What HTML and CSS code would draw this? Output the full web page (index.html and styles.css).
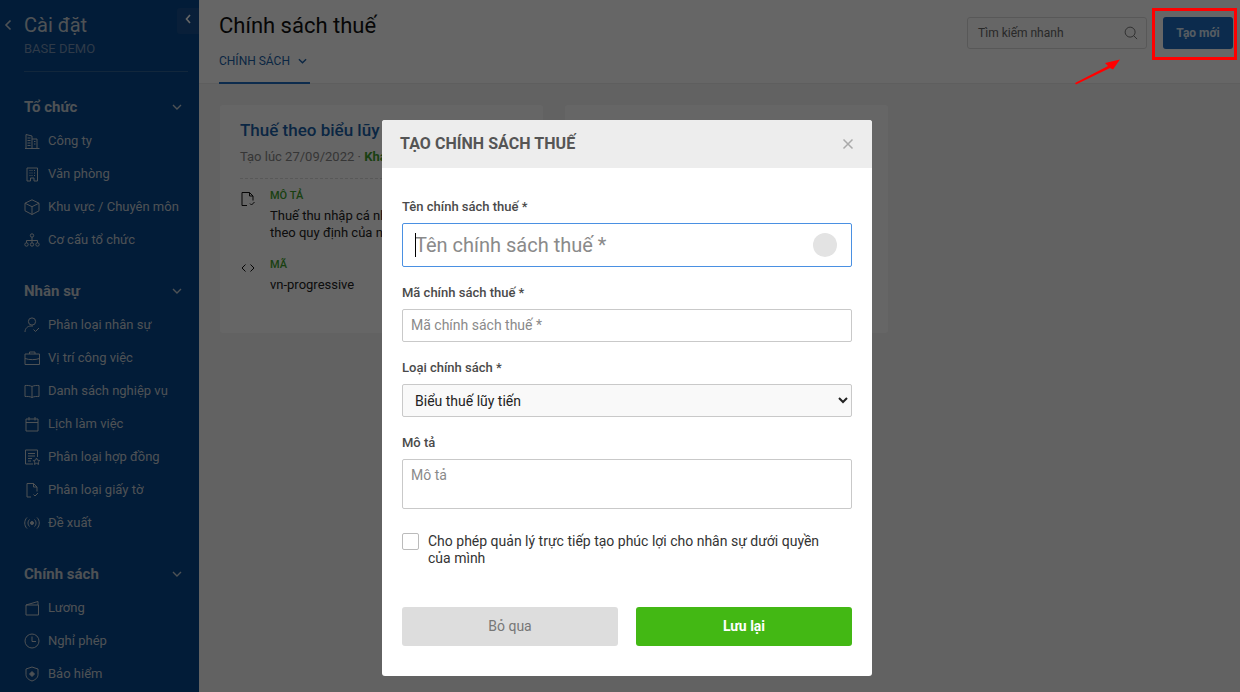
FILE: index.html
```html
<!DOCTYPE html>
<html lang="vi">
<head>
<meta charset="utf-8">
<title>Chính sách thuế</title>
<link rel="stylesheet" href="styles.css">
</head>
<body>
<div class="app">
  <aside class="sidebar">
    <div class="side-head">
      <svg class="back" viewBox="0 0 8 12"><path d="M6.500 1.500 2 6l4.500 4.500"/></svg>
      <div>
        <div class="side-title">Cài đặt</div>
        <div class="side-sub">BASE DEMO</div>
      </div>
      <div class="collapse"><svg viewBox="0 0 8 12"><path d="M6 2 2.500 6 6 10"/></svg></div>
    </div>
    <div class="side-rule"></div>

    <div class="group">
      <div class="group-head">Tổ chức <svg viewBox="0 0 10 6"><path d="M1 1l4 4 4-4"/></svg></div>
      <a class="item"><svg viewBox="0 0 16 16"><path d="M1 15.500h14.500M2 15.500V1.500l6 1.500v12.500M8 6h5v9.500M3.500 5h3M3.500 7.500h3M3.500 10h3M3.500 12.500h3M10 8.500h1.500M10 11h1.500"/></svg>Công ty</a>
      <a class="item"><svg viewBox="0 0 16 16"><path d="M3 15V2h10.500v13h-3.500v-3H6.500v3zM5.500 4.500h1M7.500 4.500h1M10 4.500h1M5.500 7h1M7.500 7h1M10 7h1M5.500 9.500h1M7.500 9.500h1M10 9.500h1"/></svg>Văn phòng</a>
      <a class="item"><svg viewBox="0 0 16 16"><path d="M8 .8l7 3.400v7.600l-7 3.700-7-3.700V4.200zM1 4.200l7 3.500 7-3.500M8 7.700v7.800"/></svg>Khu vực / Chuyên môn</a>
      <a class="item"><svg viewBox="0 0 16 16"><circle cx="8" cy="3.500" r="1.700"/><circle cx="2.500" cy="12.500" r="1.700"/><circle cx="8" cy="12.500" r="1.700"/><circle cx="13.500" cy="12.500" r="1.700"/><path d="M8 5.200v5.600M2.500 10.800V8.500h11v2.300"/></svg>Cơ cấu tổ chức</a>
    </div>

    <div class="group">
      <div class="group-head">Nhân sự <svg viewBox="0 0 10 6"><path d="M1 1l4 4 4-4"/></svg></div>
      <a class="item"><svg viewBox="0 0 16 16"><circle cx="8" cy="4.500" r="3.600"/><path d="M1 15c0-3.500 2.500-6 6-6h2M9.500 12.500l2 2 3.500-3.500"/></svg>Phân loại nhân sự</a>
      <a class="item"><svg viewBox="0 0 16 16"><path d="M1 4h14.500v10.500H1zM5.500 4V2h5.500v2M1 8.500c4 1.500 10.500 1.500 14.500 0"/></svg>Vị trí công việc</a>
      <a class="item"><svg viewBox="0 0 16 16"><path d="M8 3.500C6.500 2.500 3 2.300 1 2.500v11c2-.2 5.500 0 7 1 1.500-1 5-1.200 7-1v-11c-2-.2-5.500 0-7 1zM8 3.500v11"/></svg>Danh sách nghiệp vụ</a>
      <a class="item"><svg viewBox="0 0 16 16"><path d="M2 3h12v12H2zM2 6.500h12M5 1v3.500M11 1v3.500"/></svg>Lịch làm việc</a>
      <a class="item"><svg viewBox="0 0 16 16"><path d="M9 15H1.500V1h12v7M4 4.500h7M4 7h7M4 9.500h4M4 12h3M12.500 9l1.100 2.200 2.200.3-1.600 1.600.4 2.300-2.100-1.100-2 1.100.4-2.300-1.600-1.600 2.200-.3z"/></svg>Phân loại hợp đồng</a>
      <a class="item"><svg viewBox="0 0 16 16"><path d="M7 15H3V1.500h6.500L13 5v4.500M9.500 1.500V5H13M9.500 12.500l1.500 1.500 3-3"/></svg>Phân loại giấy tờ</a>
      <a class="item"><svg viewBox="0 0 16 16"><circle cx="8" cy="8" r="1.500" class="solid"/><path d="M5.500 4.500c-2 2-2 5 0 7M10.500 4.500c2 2 2 5 0 7M3 2.500C0 5.500 0 10.500 3 13.500M13 2.500c3 3 3 8 0 11"/></svg>Đề xuất</a>
    </div>

    <div class="group">
      <div class="group-head">Chính sách <svg viewBox="0 0 10 6"><path d="M1 1l4 4 4-4"/></svg></div>
      <a class="item"><svg viewBox="0 0 16 16"><path d="M2 5v10h12.500V5zM2 5l12-3.500V5"/></svg>Lương</a>
      <a class="item"><svg viewBox="0 0 16 16"><circle cx="8" cy="8" r="7"/><path d="M8 3.500V8.500h4"/></svg>Nghỉ phép</a>
      <a class="item"><svg viewBox="0 0 16 16"><path d="M8 1l6 2v5.500c0 3.500-3 5.500-6 6.500-3-1-6-3-6-6.500V3z"/><path d="M8 5.500 10.500 8 8 10.500 5.500 8z" class="solid"/></svg>Bảo hiểm</a>
    </div>
  </aside>

  <main class="main">
    <header class="topbar">
      <div class="topbar-left">
        <h1 class="page-title">Chính sách thuế</h1>
        <div class="tab">CHÍNH SÁCH <svg viewBox="0 0 10 6"><path d="M1 1l4 4 4-4"/></svg></div>
      </div>
      <div class="topbar-right">
        <div class="search">
          <span>Tìm kiếm nhanh</span>
          <svg viewBox="0 0 16 16"><circle cx="7" cy="7" r="5.700"/><path d="M11 11l4 4"/></svg>
        </div>
        <button class="create">Tạo mới</button>
      </div>
    </header>
    <section class="cards">
      <article class="card">
        <h2 class="card-title">Thuế theo biểu lũy tiến</h2>
        <div class="card-meta">Tạo lúc 27/09/2022 · <b>Khả dụng</b></div>
        <div class="card-row">
          <svg viewBox="0 0 16 16"><path d="M7 14.500H2V1.500h7.500L13 5v4.500M9.500 1.500V5H13M10 12.500l1.500 1.500 3-3"/></svg>
          <div>
            <div class="field-name">MÔ TẢ</div>
            <div class="field-text">Thuế thu nhập cá nhân<br>theo quy định của nhà nước</div>
          </div>
        </div>
        <div class="card-row">
          <svg viewBox="0 0 16 16"><path d="M5.500 4.500 2 8l3.500 3.500M10.500 4.500 14 8l-3.500 3.500"/></svg>
          <div>
            <div class="field-name">MÃ</div>
            <div class="field-text">vn-progressive</div>
          </div>
        </div>
      </article>
      <article class="card"></article>
    </section>
  </main>
</div>

<div class="overlay"></div>

<form class="modal">
  <div class="modal-head">
    <div class="modal-title">TẠO CHÍNH SÁCH THUẾ</div>
    <svg class="close" viewBox="0 0 12 12"><path d="M1.500 1.500l9 9M10.500 1.500l-9 9"/></svg>
  </div>
  <div class="modal-body">
    <label class="label">Tên chính sách thuế *</label>
    <div class="focus-wrap">
      <input class="input input-lg" placeholder="Tên chính sách thuế *">
      <span class="caret"></span>
      <span class="dot"></span>
    </div>
    <label class="label">Mã chính sách thuế *</label>
    <input class="input input-sm" placeholder="Mã chính sách thuế *">
    <label class="label">Loại chính sách *</label>
    <select class="select"><option>Biểu thuế lũy tiến</option></select>
    <label class="label">Mô tả</label>
    <textarea class="input textarea" placeholder="Mô tả"></textarea>
    <label class="check">
      <input type="checkbox">
      <span>Cho phép quản lý trực tiếp tạo phúc lợi cho nhân sự dưới quyền của mình</span>
    </label>
    <div class="actions">
      <button type="button" class="btn btn-cancel">Bỏ qua</button>
      <button type="button" class="btn btn-save">Lưu lại</button>
    </div>
  </div>
</form>

<div class="mark-box"></div>
<svg class="mark-arrow" viewBox="0 0 48 28"><path d="M1 26 34 9 31 6 46 2.500 39 12.500 36 11 2 27.500z"/></svg>
</body>
</html>
```
FILE: styles.css
```css
* { box-sizing: border-box; }
html, body { margin: 0; height: 100%; overflow: hidden; }
body { font-family: Roboto, "Noto Sans", sans-serif; color: #222; background: #f5f5f5; }
svg { fill: none; stroke: currentColor; stroke-width: 1; flex: none; }
svg .solid { fill: currentColor; }

.app { display: flex; height: 692px; }

.sidebar { width: 199px; flex: none; background: #05468c; color: #c4ccd4; overflow: hidden; }
.side-head { position: relative; display: flex; padding: 13px 0 0 24px; }
.back { position: absolute; left: 4px; top: 19px; width: 8px; height: 12px; stroke-width: 1.600; }
.side-title { font-size: 20px; line-height: 25px; }
.side-sub { font-size: 13px; line-height: 14px; margin-top: 4px; color: #7592b4; }
.collapse { position: absolute; left: 177px; top: 8px; width: 22px; height: 26px; background: #174f8e; border-radius: 3px 0 0 3px; display: flex; align-items: center; justify-content: center; color: #fff; }
.collapse svg { width: 8px; height: 12px; stroke-width: 1.600; margin-bottom: 4px; }
.side-rule { height: 1px; background: #2f6196; margin: 15px 11px 0 24px; }

.group { padding: 0 0 0 24px; margin-bottom: 18px; }
.group-head { display: flex; align-items: center; justify-content: space-between; height: 34px; padding-right: 17px; margin-top: 18px; font-size: 15px; font-weight: 700; }
.group-head svg { width: 10px; height: 6px; stroke-width: 1.400; }
.item { display: flex; align-items: center; gap: 8px; height: 33px; font-size: 13px; white-space: nowrap; }
.item svg { width: 16px; height: 16px; }

.main { flex: 1; min-width: 0; display: flex; flex-direction: column; }
.topbar { height: 84px; flex: none; background: #fff; border-bottom: 1px solid #ececec; display: flex; justify-content: space-between; padding: 0 7px 0 20px; }
.page-title { margin: 12px 0 0; font-size: 22px; line-height: 28px; font-weight: 400; color: #111; }
.tab { display: flex; align-items: center; gap: 8px; width: 91px; height: 32px; margin-top: 12px; padding: 0 0 13px; font-size: 12px; color: #1b5fa8; border-bottom: 2px solid #1f6cc0; }
.tab svg { width: 9px; height: 6px; stroke-width: 1.500; }
.topbar-right { display: flex; gap: 16px; padding-top: 17px; }
.search { width: 180px; height: 32px; display: flex; align-items: center; justify-content: space-between; padding: 0 8px 1px 10px; border: 1px solid #ddd; border-radius: 3px; font-size: 12px; color: #666; background: #fff; }
.search svg { width: 14px; height: 14px; }
.create { width: 70px; height: 32px; border: 0; border-radius: 3px; background: #1f6cc0; color: #d9e7f5; font: 700 12px Roboto, sans-serif; }

.cards { display: flex; gap: 22px; padding: 21px 0 0 21px; }
.card { width: 323px; height: 228px; background: #fff; border-radius: 3px; padding: 15px 20px; overflow: hidden; }
.card-title { margin: 0; font-size: 17px; line-height: 20px; font-weight: 500; color: #1b5fa8; white-space: nowrap; }
.card-meta { margin-top: 9px; padding-bottom: 14px; border-bottom: 1px dashed #ddd; font-size: 13px; line-height: 15px; color: #888; white-space: nowrap; }
.card-meta b { color: #3fa12d; }
.card-row { display: flex; gap: 14px; margin-top: 10px; }
.card-row svg { width: 16px; height: 16px; margin-top: 2px; color: #111; }
.field-name { font-size: 11px; line-height: 14px; font-weight: 500; color: #3fa12d; }
.field-text { margin-top: 4px; font-size: 13px; line-height: 17px; color: #222; white-space: nowrap; }
.card-row + .card-row { margin-top: 17px; }

.overlay { position: fixed; inset: 0; background: rgba(0, 0, 0, .6); }

.modal { position: fixed; left: 382px; top: 120px; width: 490px; height: 556px; background: #fff; border-radius: 3px; overflow: hidden; }
.modal-head { height: 48px; background: #ededed; display: flex; align-items: center; justify-content: space-between; padding: 0 18px; }
.modal-title { font-size: 16px; font-weight: 700; color: #555; padding-bottom: 2px; letter-spacing: .05px; }
.close { width: 12px; height: 12px; color: #aaa; stroke-width: 1.500; }
.modal-body { padding: 30px 20px 0; display: flex; flex-direction: column; }
.label { font-size: 13px; line-height: 18px; font-weight: 500; color: #4a4a4a; margin-bottom: 7px; }
.input { display: block; width: 100%; height: 33px; margin: 0 0 17px; padding: 0 8px; border: 1px solid #c9c9c9; border-radius: 2px; font: 14px Roboto, sans-serif; color: #333; background: #fff; outline: 0; }
.input::placeholder { color: #8a8a8a; opacity: 1; }
.input-sm { padding-bottom: 2px; }
.focus-wrap { position: relative; }
.input-lg { height: 44px; font-size: 20px; padding-left: 12px; border-color: #4a90e2; }
.caret { position: absolute; left: 13px; top: 10px; width: 1px; height: 24px; background: #000; }
.dot { position: absolute; right: 15px; top: 10px; width: 24px; height: 24px; border-radius: 50%; background: #e3e3e3; }
.select { display: block; width: 100%; height: 33px; margin: 0 0 17px; padding: 0 8px; border: 1px solid #c9c9c9; border-radius: 2px; background: #f9f9f9; font: 14px Roboto, sans-serif; color: #222; outline: 0; }
.textarea { height: 50px; padding: 7px 8px; resize: none; margin-bottom: 24px; }
.check { display: flex; gap: 9px; padding-right: 20px; font-size: 14px; line-height: 17px; color: #333; }
.check input { appearance: none; width: 17px; height: 17px; margin: 0; flex: none; border: 1px solid #bbb; border-radius: 2px; background: #fff; }
.actions { display: flex; gap: 18px; margin-top: 40px; }
.btn { flex: 1; height: 39px; padding: 0 0 2px; border: 0; border-radius: 3px; font: 14px Roboto, sans-serif; }
.btn-cancel { background: #ddd; color: #777; }
.btn-save { background: #43b814; color: #fff; font-weight: 700; }

.mark-box { position: fixed; left: 1152px; top: 8px; width: 85px; height: 52px; border: 3px solid #f00; }
.mark-arrow { position: fixed; left: 1074px; top: 57px; width: 48px; height: 28px; stroke: none; fill: #f00; }
```
